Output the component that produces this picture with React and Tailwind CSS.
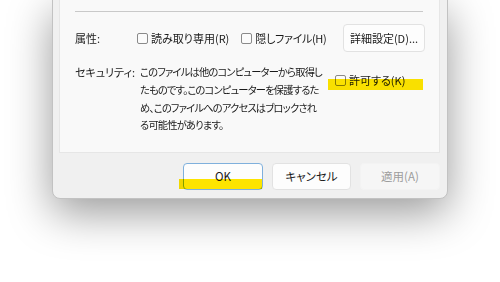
import React from "react";

const font = { fontFamily: '"Noto Sans CJK JP", "Noto Sans", sans-serif' };

function Check({ label }) {
  return (
    <label className="flex items-center gap-[3px] whitespace-nowrap">
      <span className="w-[11px] h-[11px] rounded-[2px] border border-[#8a8a8a] bg-[#fbfbfb]" />
      <span>{label}</span>
    </label>
  );
}

function Button({ children, variant }) {
  const cls =
    variant === "default"
      ? "border-[#7fb0dc] bg-[#fdfdfd] text-[#1a1a1a]"
      : variant === "disabled"
      ? "border-[#f3f3f3] bg-[#f6f6f6] text-[#9d9d9d]"
      : "border-[#e2e2e2] bg-[#fdfdfd] text-[#1a1a1a]";
  return (
    <div className={"relative flex items-center justify-center h-[27px] rounded-[4px] border text-[11.5px] " + cls}>
      {children}
    </div>
  );
}

export default function App() {
  return (
    <div className="w-[500px] h-[282px] bg-white overflow-hidden [font-feature-settings:'palt'] text-[#1a1a1a]" style={font}>
      <div className="ml-[52px] w-[396px] h-[200px] -mt-px bg-[#f0f0f0] border border-[#c2c2c2] rounded-b-[8px] shadow-[0_14px_44px_rgba(0,0,0,0.4)] flex flex-col">
        <div className="ml-[6px] mr-[7px] h-[153px] bg-[#f9f9f9] border-x border-b border-[#e6e6e6] px-[15px] pt-[11px] text-[11px]">
          <div className="h-px bg-[#c9c9c9] mr-[1px]" />

          <div className="flex items-center h-[28px] mt-[12px]">
            <div className="w-[62px]">属性:</div>
            <div className="flex items-center gap-[12px]">
              <Check label="読み取り専用(R)" />
              <span className="tracking-[-0.3px]">
                <Check label="隠しファイル(H)" />
              </span>
            </div>
            <div className="ml-auto mr-[-1px] w-[82px] h-[28px] flex items-center justify-center rounded-[4px] border border-[#e2e2e2] bg-[#fdfdfd] whitespace-nowrap">
              詳細設定(D)...
            </div>
          </div>

          <div className="flex mt-[11px]">
            <div className="w-[62px] leading-[18px] whitespace-nowrap">セキュリティ:</div>
            <div className="ml-[3px] w-[195px] shrink-0 text-[10.25px] tracking-[-0.8px] leading-[17.8px] whitespace-nowrap">
              このファイルは他のコンピューターから取得し
              <br />
              たものです。このコンピューターを保護するた
              <br />
              め、このファイルへのアクセスはブロックされ
              <br />
              る可能性があります。
            </div>
            <div className="relative ml-[0px] mt-[9px] h-[16px]">
              <Check label="許可する(K)" />
              <span className="absolute left-[-7px] top-[7px] w-[95px] h-[11px] bg-[#ffe600] mix-blend-multiply" />
            </div>
          </div>
        </div>

        <div className="flex justify-end gap-[9px] mt-[10px] pr-[7px]">
          <div className="relative w-[80px]">
            <Button variant="default">OK</Button>
            <span className="absolute left-[-4px] top-[16px] w-[83px] h-[10px] bg-[#ffe600] mix-blend-multiply" />
          </div>
          <div className="w-[79px]">
            <Button>キャンセル</Button>
          </div>
          <div className="w-[80px]">
            <Button variant="disabled">適用(A)</Button>
          </div>
        </div>
      </div>
    </div>
  );
}
